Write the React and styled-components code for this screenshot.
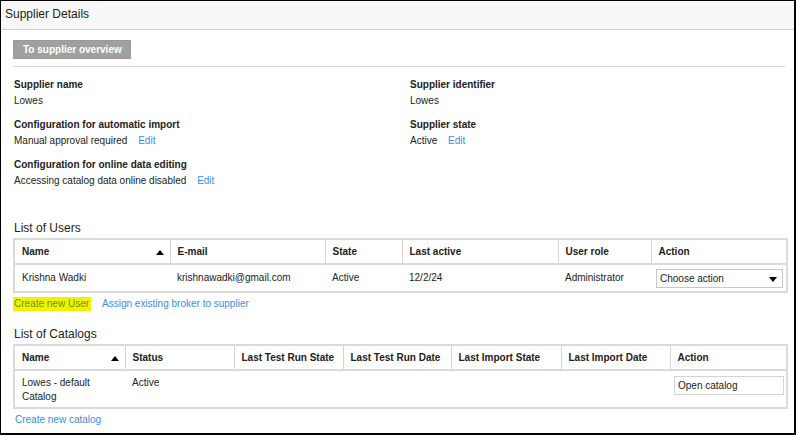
import styled, { createGlobalStyle } from "styled-components";

const Global = createGlobalStyle`
  body {
    margin: 0;
    font-family: "Liberation Sans", Arial, sans-serif;
    color: #222;
    background: #fff;
  }
`

const Frame = styled.div`
  width: 796px;
  height: 435px;
  box-sizing: border-box;
  border-style: solid;
  border-color: #000;
  border-width: 1px 2px 2px 1px;
  overflow: hidden;
`
const Header = styled.div`
  height: 28px;
  background: #f7f7f7;
  border-bottom: 1px solid #cfcfcf;
  font-size: 12px;
  line-height: 27px;
  padding-left: 4px;
`
const Body = styled.div`
  padding: 9px 8px 0 12px;
`
const GrayButton = styled.div`
  display: inline-block;
  background: #a0a0a0;
  color: #fff;
  font-weight: bold;
  font-size: 10px;
  height: 19px;
  line-height: 17px;
  padding: 0 9px;
  border: 1px solid #999;
  box-sizing: border-box;
  width: 118px;
  white-space: nowrap;
`
const Divider = styled.div`
  height: 1px;
  background: #d8d8d8;
  margin-top: 7px;
  margin-right: 1px;
`
const Fields = styled.div`
  display: grid;
  grid-template-columns: 396px 1fr;
  padding: 10px 0 0 1px;
`
const Field = styled.div`
  font-size: 10px;
  line-height: 16px;
  margin-bottom: 8px;
`
const Label = styled.div`
  font-weight: bold;
`
const Link = styled.a`
  color: #3a8ee6;
  text-decoration: none;
  margin-left: ${p => p.gap || 0}px;
`
const SectionTitle = styled.div`
  font-size: 12px;
  line-height: 16px;
  margin: ${p => p.top}px 0 2px 1px;
`
const Table = styled.table`
  width: 773px;
  table-layout: fixed;
  border-collapse: collapse;
  border: 2px solid #dadada;
  font-size: 10px;
`
const Th = styled.th`
  position: relative;
  text-align: left;
  font-weight: bold;
  white-space: nowrap;
  height: 23px;
  padding: 0 0 0 7px;
  border-left: 1px solid #d4d4d4;
  border-bottom: 2px solid #dadada;
  &:first-child { border-left: none; }
`
const Td = styled.td`
  padding: 0 0 0 7px;
  height: ${p => p.h}px;
  vertical-align: ${p => p.top ? "top" : "middle"};
  padding-top: ${p => p.top ? 5 : 0}px;
  line-height: 14px;
`
const SortArrow = styled.span`
  position: absolute;
  right: 6px;
  top: 10px;
  width: 0;
  height: 0;
  border-left: 4px solid transparent;
  border-right: 4px solid transparent;
  border-bottom: 5px solid #000;
`
const SelectBox = styled.div`
  position: relative;
  width: 127px;
  height: 19px;
  box-sizing: border-box;
  border: 1px solid #c8c8c8;
  line-height: 17px;
  padding-left: 3px;
  margin-left: -2px;
  &::after {
    content: "";
    position: absolute;
    right: 5px;
    top: 7px;
    border-left: 4px solid transparent;
    border-right: 4px solid transparent;
    border-top: 5px solid #000;
  }
`
const InputBox = styled.div`
  width: 110px;
  height: 19px;
  box-sizing: border-box;
  border: 1px solid #d4d4d4;
  line-height: 17px;
  padding-left: 3px;
  margin-left: -3px;
`
const LinkRow = styled.div`
  font-size: 10px;
  line-height: 14px;
  margin-top: ${p => p.top}px;
  display: flex;
  align-items: center;
`
const Marked = styled.span`
  background: #f2f200;
  color: #5e9a14;
  padding: 0 2px 0 1px;
  margin-right: 11px;
`

const userCols = [156, 155, 77, 156, 93, 136];
const catCols = [111, 109, 109, 108, 110, 109, 117];

const App = () => {
  return (
    <>
      <Global />
      <Frame>
        <Header>Supplier Details</Header>
        <Body>
          <GrayButton>To supplier overview</GrayButton>
          <Divider />
          <Fields>
            <div>
              <Field>
                <Label>Supplier name</Label>
                <div>Lowes</div>
              </Field>
              <Field>
                <Label>Configuration for automatic import</Label>
                <div>Manual approval required <Link gap={8}>Edit</Link></div>
              </Field>
              <Field>
                <Label>Configuration for online data editing</Label>
                <div>Accessing catalog data online disabled <Link gap={8}>Edit</Link></div>
              </Field>
            </div>
            <div>
              <Field>
                <Label>Supplier identifier</Label>
                <div>Lowes</div>
              </Field>
              <Field>
                <Label>Supplier state</Label>
                <div>Active <Link gap={8}>Edit</Link></div>
              </Field>
            </div>
          </Fields>

          <SectionTitle top={23}>List of Users</SectionTitle>
          <Table>
            <colgroup>
              {userCols.map((w, i) => <col key={i} style={{ width: w }} />)}
            </colgroup>
            <thead>
              <tr>
                <Th>Name<SortArrow /></Th>
                <Th>E-mail</Th>
                <Th>State</Th>
                <Th>Last active</Th>
                <Th>User role</Th>
                <Th>Action</Th>
              </tr>
            </thead>
            <tbody>
              <tr>
                <Td h={26}>Krishna Wadki</Td>
                <Td h={26}>krishnawadki@gmail.com</Td>
                <Td h={26}>Active</Td>
                <Td h={26}>12/2/24</Td>
                <Td h={26}>Administrator</Td>
                <Td h={26}><SelectBox>Choose action</SelectBox></Td>
              </tr>
            </tbody>
          </Table>
          <LinkRow top={4}>
            <Marked>Create new User</Marked>
            <Link>Assign existing broker to supplier</Link>
          </LinkRow>

          <SectionTitle top={15}>List of Catalogs</SectionTitle>
          <Table>
            <colgroup>
              {catCols.map((w, i) => <col key={i} style={{ width: w }} />)}
            </colgroup>
            <thead>
              <tr>
                <Th>Name<SortArrow /></Th>
                <Th>Status</Th>
                <Th>Last Test Run State</Th>
                <Th>Last Test Run Date</Th>
                <Th>Last Import State</Th>
                <Th>Last Import Date</Th>
                <Th>Action</Th>
              </tr>
            </thead>
            <tbody>
              <tr>
                <Td h={31} top>Lowes - default<br />Catalog</Td>
                <Td h={31} top>Active</Td>
                <Td h={31} top></Td>
                <Td h={31} top></Td>
                <Td h={31} top></Td>
                <Td h={31} top></Td>
                <Td h={31} top><InputBox>Open catalog</InputBox></Td>
              </tr>
            </tbody>
          </Table>
          <LinkRow top={4}>
            <Link gap={2}>Create new catalog</Link>
          </LinkRow>
        </Body>
      </Frame>
    </>
  );
};

export default App;
